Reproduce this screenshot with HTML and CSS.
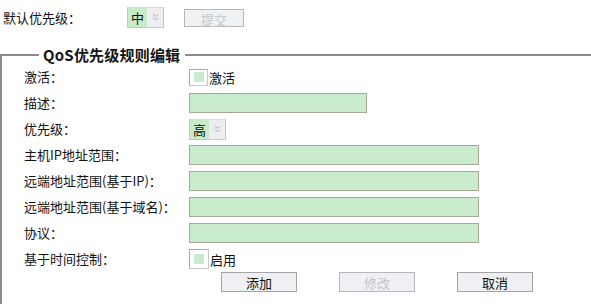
FILE: index.html
```html
<!DOCTYPE html>
<html lang="zh-CN">
<head>
<meta charset="UTF-8">
<title>QoS优先级</title>
<link rel="stylesheet" href="styles.css">
</head>
<body>

<div class="topbar">
    <span class="top-label">默认优先级：</span>
    <div class="fake-select">
        <span class="sel-value">中</span>
        <span class="sel-arrow"><svg width="7" height="8" viewBox="0 0 7 8"><path d="M1 1l2.5 2.5L6 1M1 4.5l2.5 2.5L6 4.5" fill="none" stroke="#a8aeb8" stroke-width="1"/></svg></span>
    </div>
    <button class="btn btn-submit" disabled>提交</button>
</div>

<fieldset class="rules">
    <legend>QoS优先级规则编辑</legend>
    <div class="form-grid">
        <label>激活：</label>
        <div class="ctrl"><span class="check"><span class="check-in"></span></span>激活</div>

        <label>描述：</label>
        <div class="ctrl"><input type="text" class="field field-short"></div>

        <label>优先级：</label>
        <div class="ctrl">
            <div class="fake-select">
                <span class="sel-value">高</span>
                <span class="sel-arrow"><svg width="7" height="8" viewBox="0 0 7 8"><path d="M1 1l2.5 2.5L6 1M1 4.5l2.5 2.5L6 4.5" fill="none" stroke="#a8aeb8" stroke-width="1"/></svg></span>
            </div>
        </div>

        <label>主机IP地址范围：</label>
        <div class="ctrl"><input type="text" class="field"></div>

        <label>远端地址范围(基于IP)：</label>
        <div class="ctrl"><input type="text" class="field"></div>

        <label>远端地址范围(基于域名)：</label>
        <div class="ctrl"><input type="text" class="field"></div>

        <label>协议：</label>
        <div class="ctrl"><input type="text" class="field"></div>

        <label>基于时间控制：</label>
        <div class="ctrl"><span class="check check-lg"><span class="check-in"></span></span>启用</div>

        <div class="actions">
            <button class="btn">添加</button>
            <button class="btn" disabled>修改</button>
            <button class="btn">取消</button>
        </div>
    </div>
</fieldset>

</body>
</html>
```

FILE: styles.css
```css
body {
    margin: 0;
    font-family: "Noto Sans CJK SC", "Liberation Sans", sans-serif;
    font-size: 13px;
    color: #111;
    background: #fff;
}
.topbar {
    display: flex;
    align-items: center;
    height: 20px;
    padding: 7px 0 0 3px;
}
.top-label {
    width: 124px;
}
.fake-select {
    display: flex;
    height: 19px;
    width: 35px;
    border: 1px solid #c4c8cc;
    border-top-color: #d8dadc;
}
.sel-value {
    display: flex;
    align-items: center;
    justify-content: center;
    width: 19px;
    background: #c9ebca;
    font-size: 13px;
}
.sel-arrow {
    flex: 1;
    display: flex;
    align-items: center;
    justify-content: center;
    background: #eceef2;
}
.btn {
    width: 76px;
    height: 20px;
    padding: 0;
    font-family: inherit;
    font-size: 13px;
    color: #111;
    background: #eef0f3;
    border: 1px solid #a4a4a4;
    border-radius: 0;
}
.btn:disabled {
    color: #c4c6c8;
    border-color: #b8b8b8;
}
.btn-submit {
    width: 60px;
    height: 18px;
    margin-left: 20px;
    margin-top: 2px;
    border-color: #c8c8c8;
    background: #eff1f3;
}
.rules {
    margin: 18px 0 0 0;
    padding: 0 0 0 22px;
    border: 0;
    border-top: 2px solid #8a8a8a;
    border-left: 2px solid #8a8a8a;
    min-height: 260px;
}
.rules legend {
    margin-left: 15px;
    padding: 0 5px 0 4px;
    font-size: 15px;
    line-height: 20px;
    font-weight: bold;
    letter-spacing: 0.2px;
    color: #151515;
}
.form-grid {
    display: grid;
    grid-template-columns: 165px 1fr;
    grid-auto-rows: 26px;
    align-items: center;
    margin-top: -1px;
}
.form-grid label {
    line-height: 26px;
}
.ctrl {
    display: flex;
    align-items: center;
}
.field {
    box-sizing: border-box;
    width: 290px;
    height: 20px;
    margin: 0;
    background: #c8ebcb;
    border: 1px solid #a8a898;
    outline: none;
}
.field-short {
    width: 178px;
}
.check {
    box-sizing: border-box;
    display: flex;
    align-items: center;
    justify-content: center;
    width: 19px;
    height: 17px;
    border: 1px solid #a8a8a8;
    border-right-color: #c8c8c8;
    border-bottom-color: #c8c8c8;
    margin-right: 1px;
    background: #fdfdfd;
}
.check-lg {
    width: 20px;
    height: 20px;
}
.check-in {
    width: 10px;
    height: 10px;
    background: #cbe8d0;
}
.actions {
    grid-column: 2;
    display: flex;
    gap: 42px;
    padding-left: 32px;
    align-self: start;
}
```
